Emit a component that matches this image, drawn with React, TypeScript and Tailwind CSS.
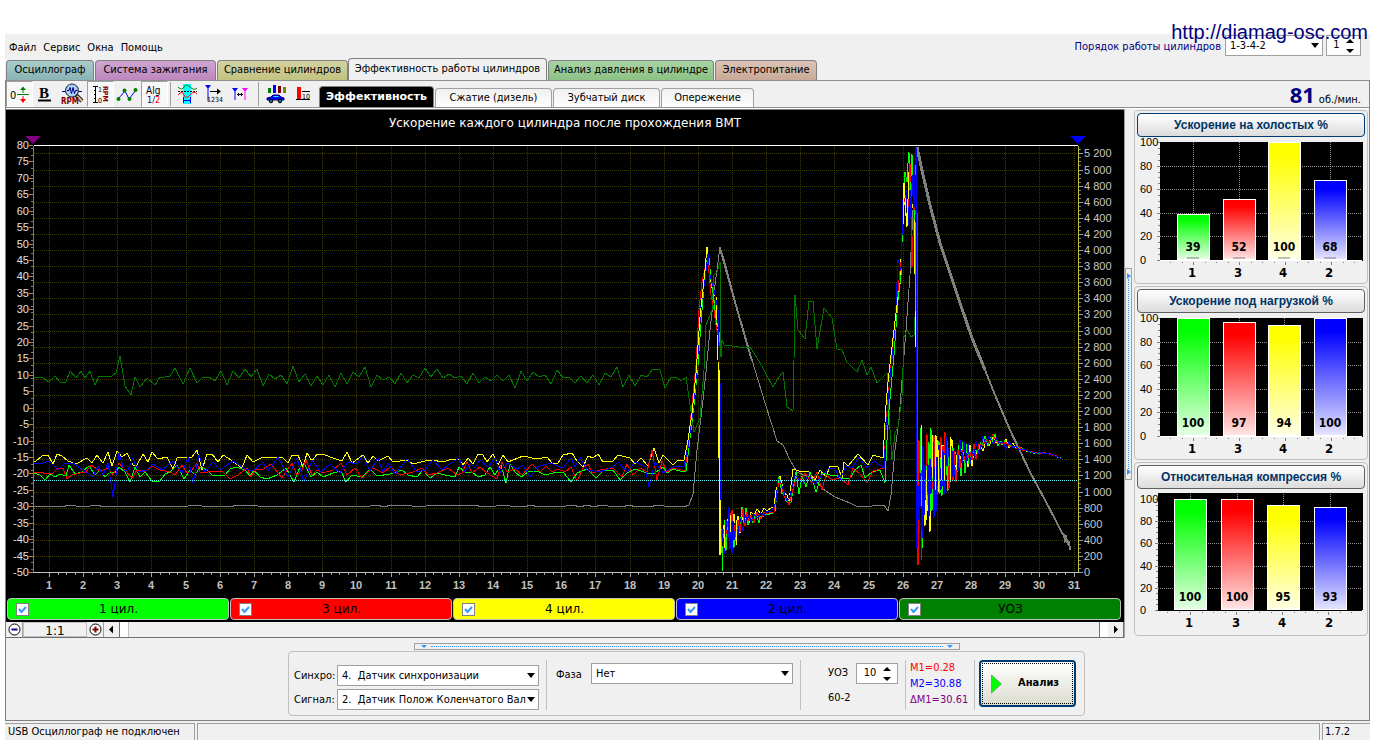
import { useState, type ReactNode } from 'react'
import { clsx } from 'clsx'

type Point = [number, number]

const UI_FONT = "font-['DejaVu_Sans_Condensed','Noto_Sans',sans-serif]"

const TABS = [
  { label: 'Осциллограф', style: 'mr-px w-[88px] from-[#a9cccc] to-[#8ab3b3]' },
  { label: 'Система зажигания', style: 'mr-px w-[121px] from-[#cfa6cf] to-[#bd86bd]' },
  { label: 'Сравнение цилиндров', style: 'w-[131px] from-[#d3d3a4] to-[#c2c280]' },
  { label: 'Эффективность работы цилиндров', style: 'mr-px w-[199px] from-[#f0f0f0] to-[#f0f0f0]' },
  { label: 'Анализ давления в цилиндре', style: 'mr-px w-[166px] from-[#a9d3a4] to-[#8cc184]' },
  { label: 'Электропитание', style: 'w-[102px] from-[#dbc4b6] to-[#c9a997]' },
]

const SUB_TABS = [
  { label: 'Сжатие (дизель)', style: 'w-[117px]' },
  { label: 'Зубчатый диск', style: 'w-[107px]' },
  { label: 'Опережение', style: 'w-[93px]' },
]

const LEGEND = [
  { label: '1 цил.', style: 'bg-[#00ff00]' },
  { label: '3 цил.', style: 'bg-[#ff0000]' },
  { label: '4 цил.', style: 'bg-[#ffff00]' },
  { label: '2 цил.', style: 'bg-[#0000ff]' },
  { label: 'УОЗ', style: 'bg-[#008000]' },
]

// Idle section of each trace, in chart units
const YELLOW: Point[] = [
  [34, 461], [36, 461], [42, 456], [48, 455], [53, 464], [57, 454], [62, 456], [68, 461], [76, 464], [87, 458],
  [92, 463], [97, 455], [103, 463], [108, 452], [112, 466], [117, 451], [122, 457], [127, 453], [133, 465], [137, 465],
  [143, 454], [148, 462], [152, 452], [158, 459], [167, 457], [173, 469], [177, 458], [192, 457], [197, 450], [202, 470],
  [207, 454], [212, 454], [218, 462], [223, 455], [228, 458], [242, 468], [247, 455], [253, 462], [263, 457], [283, 458],
  [288, 463], [292, 455], [298, 455], [303, 467], [307, 453], [312, 461], [317, 454], [323, 454], [330, 457], [342, 461],
  [347, 452], [352, 463], [363, 455], [368, 463], [373, 456], [378, 461], [388, 456], [393, 462], [407, 460], [413, 464],
  [425, 461], [433, 460], [442, 462], [453, 459], [460, 460], [463, 465], [468, 458], [473, 464], [478, 454], [483, 455],
  [487, 462], [493, 454], [498, 465], [503, 455], [508, 462], [523, 456], [537, 459], [547, 457], [552, 463], [558, 463],
  [563, 455], [572, 453], [577, 461], [583, 467], [588, 456], [593, 458], [598, 454], [603, 462], [613, 461], [618, 455],
  [630, 458], [635, 464], [641, 458], [648, 466], [654, 448], [659, 463], [663, 455], [673, 465], [678, 460], [684, 460],
]
const GREEN: Point[] = [
  [34, 473], [40, 475], [45, 480], [50, 474], [55, 477], [60, 474], [66, 476], [69, 465], [75, 474], [82, 472],
  [89, 466], [95, 475], [100, 470], [105, 477], [110, 472], [115, 473], [119, 467], [125, 472], [130, 482], [135, 467],
  [140, 477], [145, 472], [152, 481], [160, 481], [165, 474], [170, 472], [177, 465], [184, 479], [190, 470], [195, 475],
  [200, 467], [207, 470], [213, 476], [225, 475], [230, 469], [236, 467], [245, 470], [250, 476], [254, 470], [260, 477],
  [267, 479], [277, 475], [286, 468], [294, 482], [300, 467], [304, 463], [311, 477], [317, 472], [323, 477], [333, 473],
  [341, 471], [346, 482], [352, 475], [362, 477], [370, 469], [377, 476], [390, 474], [402, 470], [408, 475], [417, 477],
  [423, 470], [430, 478], [437, 473], [445, 475], [455, 477], [459, 467], [465, 472], [472, 472], [478, 477], [485, 475],
  [490, 467], [495, 475], [501, 465], [506, 483], [510, 464], [515, 472], [521, 477], [528, 472], [537, 471], [545, 475],
  [557, 472], [563, 472], [571, 482], [577, 473], [587, 469], [596, 478], [603, 471], [613, 470], [620, 480], [627, 473],
  [635, 469], [647, 473], [655, 473], [663, 467], [667, 473], [673, 469], [683, 472], [686, 471],
]
const RED: Point[] = [
  [34, 472], [40, 472], [47, 474], [53, 473], [58, 468], [63, 468], [67, 479], [72, 475], [80, 473], [86, 472],
  [91, 465], [100, 471], [108, 468], [113, 475], [119, 463], [125, 470], [132, 478], [137, 470], [145, 472], [152, 466],
  [160, 470], [170, 472], [175, 475], [182, 465], [187, 473], [192, 470], [197, 463], [200, 472], [208, 472], [222, 471],
  [230, 479], [238, 475], [247, 468], [251, 477], [255, 470], [263, 469], [271, 464], [282, 478], [287, 470], [292, 463],
  [297, 475], [302, 470], [306, 460], [312, 475], [317, 470], [323, 473], [333, 470], [341, 463], [347, 475], [355, 468],
  [362, 478], [367, 473], [373, 468], [383, 473], [390, 467], [400, 475], [413, 472], [422, 468], [428, 475], [437, 473],
  [448, 468], [457, 475], [462, 473], [467, 462], [472, 473], [480, 467], [487, 473], [497, 479], [502, 462], [507, 472],
  [515, 469], [522, 475], [532, 464], [540, 472], [546, 466], [552, 472], [558, 469], [565, 472], [571, 467], [577, 481],
  [583, 468], [588, 464], [592, 473], [600, 470], [613, 468], [622, 477], [627, 464], [633, 475], [640, 468], [647, 472],
  [652, 450], [657, 480], [662, 461], [667, 472], [673, 468], [685, 471],
]
const BLUE: Point[] = [
  [34, 463], [40, 464], [49, 461], [58, 470], [65, 463], [73, 463], [80, 468], [86, 472], [93, 477], [98, 466],
  [103, 475], [108, 463], [113, 497], [119, 453], [124, 470], [128, 470], [133, 458], [138, 472], [147, 470], [153, 464],
  [162, 470], [173, 461], [182, 473], [188, 457], [193, 483], [199, 455], [205, 472], [213, 462], [220, 470], [233, 461],
  [245, 469], [253, 471], [263, 462], [268, 471], [278, 457], [288, 477], [297, 458], [304, 482], [312, 460], [321, 472],
  [330, 464], [340, 473], [348, 462], [357, 464], [363, 456], [370, 471], [378, 458], [383, 472], [388, 463], [395, 474],
  [407, 459], [417, 472], [425, 470], [433, 460], [442, 470], [448, 465], [459, 458], [465, 472], [470, 463], [475, 468],
  [480, 460], [488, 467], [495, 458], [500, 473], [507, 463], [517, 469], [523, 465], [530, 477], [537, 467], [550, 463],
  [563, 468], [571, 458], [575, 467], [580, 457], [587, 470], [600, 472], [613, 467], [618, 462], [627, 472], [635, 462],
  [645, 467], [649, 487], [655, 462], [663, 473], [673, 467], [684, 466],
]

// Two throttle blips: rise, peak and fall
const BLIP_1: Record<string, Point[]> = {
  yellow: [[688, 440], [692, 413], [696, 373], [700, 317], [705, 270], [707, 247], [710, 277], [713, 293], [716, 297], [718, 360], [720, 555]],
  green: [[688, 455], [694, 405], [698, 365], [702, 310], [706, 262], [709, 258], [711, 280], [714, 300], [716, 320], [719, 330], [721, 520], [723, 571]],
  red: [[688, 445], [691, 415], [696, 365], [699, 310], [702, 282], [705, 268], [708, 262], [711, 295], [714, 310], [716, 325], [719, 340], [721, 530]],
  blue: [[688, 448], [692, 418], [697, 370], [701, 305], [705, 280], [708, 254], [710, 275], [714, 290], [718, 310], [720, 380], [721, 520]],
}
const REST: Record<string, Point[]> = {
  yellow: [[793, 469], [802, 472], [808, 471], [815, 480], [820, 470], [826, 477], [830, 466], [838, 467], [842, 478], [844, 462], [848, 466], [858, 454], [868, 465], [873, 455], [883, 458]],
  green: [[796, 472], [799, 494], [802, 476], [806, 487], [810, 472], [816, 492], [822, 473], [830, 475], [836, 475], [842, 479], [850, 478], [855, 470], [861, 465], [865, 478], [872, 472], [880, 470], [885, 483]],
  red: [[796, 478], [800, 480], [805, 473], [812, 483], [817, 472], [822, 490], [826, 475], [832, 480], [840, 478], [848, 485], [853, 468], [861, 475], [867, 483], [873, 471], [884, 468]],
  blue: [[795, 475], [803, 484], [808, 475], [815, 484], [822, 475], [828, 469], [835, 468], [840, 480], [846, 466], [852, 468], [859, 457], [867, 468], [874, 461], [884, 468]],
}
const BLIP_2: Record<string, Point[]> = {
  yellow: [[886, 405], [888, 382], [893, 338], [898, 297], [900, 285], [902, 233], [904, 183], [905, 205], [907, 227], [909, 172], [910, 190], [912, 208], [914, 200], [916, 347], [917, 480]],
  green: [[887, 440], [889, 410], [894, 355], [898, 300], [901, 275], [903, 210], [905, 172], [907, 182], [908, 163], [909, 152], [910, 200], [912, 154], [913, 190], [915, 220], [917, 400], [918, 500]],
  red: [[886, 425], [890, 375], [894, 335], [899, 280], [901, 262], [903, 205], [906, 195], [908, 215], [910, 164], [911, 182], [912, 268], [914, 205], [916, 215], [917, 345], [918, 565]],
  blue: [[886, 430], [890, 378], [895, 330], [898, 260], [901, 270], [903, 200], [906, 190], [908, 225], [910, 190], [911, 218], [913, 175], [914, 208], [915, 165], [916, 148], [916, 500], [917, 548]],
}

// [x, middle, amplitude]
const ENVELOPE_1: [number, number, number][] = [
  [721, 535, 22], [727, 528, 28], [735, 528, 26], [742, 520, 18], [750, 517, 10], [760, 515, 5], [770, 512, 3], [775, 509, 2],
  [777, 488, 12], [779, 476, 4], [783, 492, 5], [788, 502, 3], [792, 499, 3],
]
const ENVELOPE_2: [number, number, number][] = [
  [917, 495, 55], [921, 490, 66], [926, 485, 62], [932, 478, 50], [940, 468, 42], [948, 460, 32], [955, 460, 24], [965, 457, 18],
  [975, 452, 12], [982, 444, 9], [992, 440, 7], [1002, 443, 6], [1012, 446, 4], [1024, 450, 1], [1034, 453, 1], [1048, 453, 1], [1061, 458, 1],
]

const ADVANCE: Point[] = [
  [34, 377], [43, 378], [49, 382], [55, 376], [60, 382], [66, 382], [70, 371], [76, 378], [81, 371], [85, 378],
  [90, 371], [95, 385], [99, 376], [112, 376], [116, 373], [120, 356], [125, 386], [131, 395], [135, 377], [140, 387],
  [147, 378], [155, 385], [160, 377], [165, 377], [170, 376], [175, 368], [183, 384], [190, 368], [197, 383],
]
const ADVANCE_TAIL: Point[] = [
  [660, 370], [665, 388], [671, 377], [676, 377], [681, 381], [686, 377], [690, 405], [694, 432], [700, 418], [704, 370],
  [706, 325], [712, 310], [714, 275], [717, 272], [720, 262], [721, 357], [722, 340], [724, 345], [732, 346], [745, 348],
  [750, 347], [757, 358], [763, 368], [766, 374], [773, 387], [779, 377], [783, 372], [787, 407], [793, 411], [794, 360],
  [795, 295], [798, 330], [805, 339], [809, 301], [813, 301], [817, 349], [824, 308], [832, 318], [837, 349], [842, 350],
  [847, 362], [857, 372], [862, 360], [867, 375], [871, 367], [877, 383], [887, 373], [890, 430], [892, 460], [895, 433],
  [898, 427], [902, 397], [904, 337], [907, 330], [911, 337], [914, 335], [915, 317], [916, 290],
]
const RPM_TAIL: Point[] = [
  [670, 506], [684, 507], [689, 505], [693, 494], [697, 450], [703, 400], [706, 372], [710, 330], [715, 285], [718, 262],
  [720, 247], [724, 259], [735, 300], [745, 335], [755, 370], [765, 403], [772, 425], [777, 441], [783, 445], [790, 460],
  [797, 472], [815, 480], [823, 489], [835, 497], [850, 503], [858, 507], [872, 506], [884, 505], [888, 511], [891, 495],
  [895, 450], [899, 420], [902, 380], [906, 330], [910, 275], [912, 230], [914, 190], [917, 147],
]
const RPM_FALL: Point[] = [
  [917, 147], [921, 166], [930, 205], [940, 243], [950, 273], [960, 303], [972, 338], [985, 370],
]
const RPM_END: Point[] = [
  [985, 370], [995, 395], [1010, 430], [1020, 451], [1030, 472], [1045, 500], [1055, 519], [1062, 533], [1064, 535],
  [1065, 540], [1066, 537], [1068, 545], [1069, 541], [1070, 550],
]

function makeRandom(seed: number) {
  let s = seed
  return () => {
    s = (s * 16807) % 2147483647
    return s / 2147483647
  }
}

function scatter(env: [number, number, number][], seed: number, bias = 0): Point[] {
  const rnd = makeRandom(seed)
  const pts: Point[] = []
  let side = seed % 2 ? 1 : -1
  for (let i = 0; i < env.length - 1; i++) {
    const [x0, m0, a0] = env[i]
    const [x1, m1, a1] = env[i + 1]
    for (let x = x0 + (seed % 3 ? 1 : 0); x < x1; ) {
      const t = (x - x0) / (x1 - x0)
      const amp = a0 + (a1 - a0) * t
      const r = rnd()
      // Squared so that only a few samples reach the full amplitude
      pts.push([x, Math.round(m0 + (m1 - m0) * t + side * amp * (0.15 + 0.85 * r * r) + bias)])
      side = -side
      x += amp > 25 ? 1 : amp > 12 ? 2 : 3
    }
  }
  return pts
}

function flat(from: number, to: number, step: number, mid: number, amp: number, seed: number): Point[] {
  const rnd = makeRandom(seed)
  const pts: Point[] = []
  for (let x = from, side = 1; x < to; x += step, side = -side) {
    pts.push([x, Math.round(mid + side * amp * rnd())])
  }
  return pts
}

const toPoints = (pts: Point[]) => pts.map((p) => p.join(',')).join(' ')

const trace = (idle: Point[], name: string, seed: number, bias: number) =>
  toPoints([
    ...idle,
    ...BLIP_1[name],
    ...scatter(ENVELOPE_1, seed, bias),
    ...REST[name],
    ...BLIP_2[name],
    ...scatter(ENVELOPE_2, seed + 90),
    [1062, 459],
  ])

const TRACES = [
  { color: '#ffff00', points: trace(YELLOW, 'yellow', 3391, -3) },
  { color: '#00ff00', points: trace(GREEN, 'green', 4212, 2) },
  { color: '#ff0000', points: trace(RED, 'red', 7717, 1) },
  { color: '#0000ff', points: trace(BLUE, 'blue', 9974, -1) },
]

// The yellow trace stays readable over the dense bursts
const YELLOW_ACCENTS =
  'M724.5 525V548 M730.5 515V532 M736.5 520V545 M921.5 425V470 M926.5 470V520 M932.5 435V478 M935.5 460V490 M938.5 450V492 M941.5 445V480 M944.5 455V480 M950.5 437V482 M956.5 455V470 M688 440L692 413L696 373L700 317L705 270L707 247 M886 405L888 382L893 338L898 297 M903 225L904 183L907 227L909 172'

const xAt = (n: number) => Math.round(49 + (n - 1) * 34.15)
const leftY = (v: number) => Math.round(572 - (v + 50) * 3.285)
const rightY = (v: number) => Math.round(572 - v * 0.0805)
const range = (n: number) => Array.from({ length: n }, (_, i) => i)

function MainChart() {
  return (
    <svg viewBox="6 130 1118 467" className="block w-full" role="img" aria-label="Ускорение каждого цилиндра">
      <g stroke="#3c3c00" strokeDasharray="1 1" shapeRendering="crispEdges">
        {range(31).map((i) => (
          <line key={i} x1={xAt(i + 1) + 0.5} x2={xAt(i + 1) + 0.5} y1="146" y2="572" />
        ))}
        {range(26).map((i) => (
          <line key={i} x1="34" x2="1078" y1={rightY((i + 1) * 200) + 0.5} y2={rightY((i + 1) * 200) + 0.5} />
        ))}
      </g>

      <g fill="none" strokeWidth="1" shapeRendering="crispEdges">
        <polyline stroke="#808080" points={toPoints([...flat(34, 670, 7, 506, 1, 31), ...RPM_TAIL])} />
        <polyline stroke="#808080" strokeWidth="3" points={toPoints(RPM_FALL)} />
        <polyline stroke="#808080" strokeWidth="2" points={toPoints(RPM_END)} />
        <polyline stroke="#808080" strokeWidth="2" points="720,248 735,302 752,361" />
        <polyline
          stroke="#007800"
          points={toPoints([...ADVANCE, ...flat(203, 658, 6, 377, 11, 555), ...ADVANCE_TAIL])}
        />
        {TRACES.map((t) => (
          <polyline key={t.color} stroke={t.color} points={t.points} />
        ))}
        <path stroke="#ff0000" d="M917.5 213V345 M918.5 520V565 M921.5 530V560" />
        <path stroke="#0000ff" d="M916.5 150V545 M720.5 400V500 M721.5 440V500" />
        <path stroke="#ffff00" d="M719.5 370V555 M720.5 500V550" />
        <path stroke="#ffff00" d={YELLOW_ACCENTS} />
      </g>

      <g shapeRendering="crispEdges">
        <line x1="34" x2="1078" y1="480.5" y2="480.5" stroke="#60ffff" strokeDasharray="1 1" />
        <line x1="34" x2="1078" y1="145.5" y2="145.5" stroke="#ffffff" />
        <line x1="33.5" x2="33.5" y1="146" y2="573" stroke="#40a040" />
        <line x1="1078.5" x2="1078.5" y1="146" y2="573" stroke="#c0c040" />
        <line x1="29" x2="1079" y1="572.5" y2="572.5" stroke="#c0c0c0" />
        {range(131).filter((i) => i % 5 !== 0).filter((i) => i % 2 === 1).map((i) => (
          <line key={i} x1="31" x2="33" y1={leftY(i - 50) + 0.5} y2={leftY(i - 50) + 0.5} stroke="#808080" />
        ))}
        {range(27).map((i) => (
          <line key={i} x1="29" x2="33" y1={leftY(i * 5 - 50) + 0.5} y2={leftY(i * 5 - 50) + 0.5} stroke="#c08040" />
        ))}
        {range(106).map((i) => (
          <line key={i} x1="1079" x2="1081" y1={rightY(i * 50) + 0.5} y2={rightY(i * 50) + 0.5} stroke="#808080" />
        ))}
        {range(27).map((i) => (
          <line key={i} x1="1079" x2="1083" y1={rightY(i * 200) + 0.5} y2={rightY(i * 200) + 0.5} stroke="#a0a0a0" />
        ))}
        {range(121).map((i) => {
          const x = Math.round(49 + i * 8.5375) + 0.5
          return <line key={i} x1={x} x2={x} y1="573" y2={i % 4 ? 575 : 577} stroke="#a0a0a0" />
        })}
      </g>

      <g className="font-['Liberation_Sans',Arial,sans-serif] text-[11px]">
        <g fill="#e0e0e0" textAnchor="end">
          {range(27).map((i) => (
            <text key={i} x="29" y={leftY(i * 5 - 50) + 4}>{i * 5 - 50}</text>
          ))}
        </g>
        <g fill="#c8c8c8">
          {range(27).map((i) => (
            <text key={i} x="1084" y={rightY(i * 200) + 4}>
              {i < 5 ? i * 200 : `${Math.floor(i / 5)} ${String((i % 5) * 200).padStart(3, '0')}`}
            </text>
          ))}
        </g>
        <g fill="#c0c0c0" textAnchor="middle" className="font-bold">
          {range(31).map((i) => (
            <text key={i} x={xAt(i + 1)} y="589">{i + 1}</text>
          ))}
        </g>
      </g>

      <path d="M25 136h16l-8 8z" fill="#800080" />
      <path d="M1070 136h16l-8 8z" fill="#0000ff" />
    </svg>
  )
}

const BAR_COLORS = ['#00ff00', '#ff0000', '#ffff00', '#0000ff']
const CYLINDERS = [1, 3, 4, 2]

function BarPanel({
  id,
  title,
  values,
  active,
  left = 23,
  full = 4,
  base = 122,
  centers = [56, 102, 147, 193],
}: {
  id: string
  title: string
  values: number[]
  active?: boolean
  left?: number
  full?: number
  base?: number
  centers?: number[]
}) {
  const yAt = (v: number) => Math.round(base - (v / 100) * (base - full))

  return (
    <section className="rounded border border-[#c0c0c0] p-0.5">
      <button
        className={clsx(
          'block h-6 w-full rounded-sm border bg-linear-to-b from-white to-[#dcdcdc] text-center text-[12px] leading-[22px] font-bold text-[#003366]',
          "font-['Liberation_Sans',Arial,sans-serif]",
          active ? 'border-[#003c74]' : 'border-[#606060]',
        )}
      >
        {title}
      </button>
      <svg viewBox="0 0 228 143" className="mt-px block w-full overflow-visible" role="img" aria-label={title}>
        <defs>
          {BAR_COLORS.map((c, i) => (
            <linearGradient key={c} id={`${id}-${i}`} x1="0" x2="0" y1="0" y2="1.1">
              <stop offset="0.1" stopColor={c} />
              <stop offset="1" stopColor="#ffffff" />
            </linearGradient>
          ))}
        </defs>
        <rect x={left} y={full === 4 ? 4 : 3} width={226 - left} height={base - 3} fill="#000" />
        <g stroke="#909090" strokeDasharray="1 1" shapeRendering="crispEdges">
          {[20, 40, 60, 80].map((v) => (
            <line key={v} x1={left} x2="225" y1={yAt(v) + 0.5} y2={yAt(v) + 0.5} />
          ))}
          {centers.map((c) => (
            <line key={c} x1={c + 0.5} x2={c + 0.5} y1="4" y2={base} />
          ))}
        </g>
        <g stroke="#808080" shapeRendering="crispEdges">
          {range(21).map((i) => (
            <line key={i} x1={i % 4 ? left - 2 : left - 3} x2={left} y1={yAt(i * 5) + 0.5} y2={yAt(i * 5) + 0.5} />
          ))}
          {range(17).map((i) => {
            const x = Math.round(centers[0] - 23 + i * 11.5) + 0.5
            return <line key={i} x1={x} x2={x} y1={base + 2} y2={i % 4 === 2 ? base + 5 : base + 3} />
          })}
        </g>
        <line x1={left} x2="225" y1={base + 0.5} y2={base + 0.5} stroke={active !== undefined ? '#fff' : '#000'} shapeRendering="crispEdges" />
        {values.map((v, i) => (
          <rect
            key={i}
            x={centers[i] - 16 + 0.5}
            y={yAt(v) + 0.5}
            width="32"
            height={base - yAt(v) - 1}
            fill={`url(#${id}-${i})`}
            stroke="#fff"
            shapeRendering="crispEdges"
          />
        ))}
        <g className="font-['Liberation_Sans',Arial,sans-serif]" fill="#000">
          {[0, 20, 40, 60, 80, 100].map((v) => (
            <text key={v} x="3" y={yAt(v) + 4} className="text-[11px]">{v}</text>
          ))}
          <g textAnchor="middle" className="font-['DejaVu_Sans_Condensed','Noto_Sans',sans-serif] text-[13px] font-bold">
            {values.map((v, i) => (
              <g key={i}>
                <text x={centers[i]} y={base - 9} className="text-[12px]">{v}</text>
                {active && <line x1={centers[i] - 6} x2={centers[i] + 6} y1={base - 2} y2={base - 2} stroke="#808080" />}
                <text x={centers[i] - 1} y={base + 17}>{CYLINDERS[i]}</text>
              </g>
            ))}
          </g>
        </g>
      </svg>
    </section>
  )
}

function Tool({ label, pressed, children }: { label: string; pressed?: boolean; children: ReactNode }) {
  return (
    <button
      aria-label={label}
      aria-pressed={pressed}
      className={clsx(
        'h-[26px] w-[27px] shrink-0 border',
        pressed ? 'border-[#a0a0a0] border-r-white border-b-white bg-[#f8f8f8]' : 'border-transparent',
      )}
    >
      <svg viewBox="0 0 25 24" className="block h-6 w-[25px] font-['DejaVu_Sans_Condensed',sans-serif]">
        {children}
      </svg>
    </button>
  )
}

function Combo({ label, value, className }: { label: string; value: string; className: string }) {
  return (
    <span className={clsx('relative block', className)}>
      <select
        aria-label={label}
        className="block h-[21px] w-full appearance-none border border-[#a0a0a0] bg-white pl-1 text-[11px] leading-[19px] text-black"
      >
        <option>{value}</option>
      </select>
      <svg viewBox="0 0 8 5" className="pointer-events-none absolute top-2 right-1 h-[5px] w-2">
        <path d="M0 0h8L4 5z" />
      </svg>
    </span>
  )
}

function Spin({ label, value, className }: { label: string; value: string; className: string }) {
  return (
    <span className={clsx('flex h-[21px] items-center border border-[#a0a0a0] bg-white', className)}>
      <input aria-label={label} defaultValue={value} className="w-full min-w-0 bg-transparent text-center text-[11px] outline-none" />
      <svg viewBox="0 0 8 14" className="mr-1.5 h-3.5 w-2 shrink-0">
        <path d="M0 4h8L4 0zM0 10h8L4 14z" />
      </svg>
    </span>
  )
}

function Toolbar() {
  return (
    <div className="flex h-[28px] items-end border-y border-[#909090] bg-[#f0f0f0]">
      <div className="flex h-[26px] items-center">
        <Tool label="Ноль" pressed>
          <text x="3" y="17" fontSize="11">0</text>
          <path d="M10 12.500h12" stroke="#008000" />
          <path d="M13 8h6l-3-3.500zM15.500 8h1v3h-1z" fill="#008000" />
          <path d="M13 17h6l-3 4zM15.500 14h1v3h-1z" fill="#f00" />
        </Tool>
        <Tool label="Жирный">
          <text x="5" y="16" fontSize="15" fontWeight="700" className="font-['Liberation_Serif',serif]">B</text>
          <path d="M4 18.500h13" stroke="#000" strokeWidth="2" />
        </Tool>
        <Tool label="RPM">
          <path d="M1 9.500h4M17 9.500h4" stroke="#000080" />
          <circle cx="11" cy="8.500" r="6.500" fill="#a8d0ff" stroke="#202020" />
          <path d="M6 8.500h2l1-3 1.500 6 1.500-6 1.500 6 1-3h2" fill="none" stroke="#000080" />
          <path d="M15 13l6 6" stroke="#202020" strokeWidth="4" />
          <path d="M16 14l5 5" stroke="#e0c080" strokeWidth="2" />
          <text x="0" y="22" fontSize="8" fontWeight="700" fill="#800000">RPM</text>
        </Tool>
        <Tool label="Шкала RPM" pressed>
          <path d="M5 4.500h5M5 20.500h5M7.500 5v15M6 8.500h2M6 12.500h2M6 16.500h2" stroke="#000" />
          <text x="10" y="10" fontSize="7">1</text>
          <text x="10" y="21" fontSize="7">0</text>
          <text x="15" y="4" fontSize="7" fontWeight="700" fill="#800000" transform="rotate(90 15 4)">RPM</text>
        </Tool>
        <Tool label="Точки">
          <path d="M3 17l7-8 4 8 7-9" fill="none" stroke="#00f" strokeWidth="1" />
          <g fill="#008000">
            <circle cx="3.500" cy="17" r="2" />
            <circle cx="9.500" cy="8.500" r="2" />
            <circle cx="14.500" cy="17" r="2" />
            <circle cx="20.500" cy="8" r="2" />
          </g>
        </Tool>
        <Tool label="Алгоритм" pressed>
          <text x="4" y="12" fontSize="10">Alg</text>
          <text x="5" y="21" fontSize="9" fill="#000080">1/<tspan fill="#f00">2</tspan></text>
        </Tool>
        <span className="mx-0.5 h-6 w-px bg-[#a0a0a0]" />
        <Tool label="Диапазон">
          <rect x="9" y="2" width="8" height="20" fill="#0ff" />
          <path d="M4 5q4 4 6 0t6 0 7 1" fill="none" stroke="#008000" />
          <path d="M4 9.500h19" stroke="#000" strokeDasharray="2 1" />
          <path d="M4 13q4-5 6 0t6 0 7-1" fill="none" stroke="#f00" />
          <path d="M9.500 15v6M16.500 15v6M10 18.500h6" stroke="#00f" />
        </Tool>
        <Tool label="Разметка">
          <path d="M4 3h6L7 7zM6.500 6h1v13h-1z" fill="#00f" />
          <path d="M9 9.500h9" stroke="#000" />
          <path d="M16 6.500l4 3-4 3z" />
          <text x="6" y="20" fontSize="7">1234</text>
        </Tool>
        <Tool label="Маркеры">
          <path d="M4 6h6L7 10zM6.500 9h1v9h-1z" fill="#00f" />
          <path d="M14 6h6l-3 4zM16.500 9h1v9h-1z" fill="#f0f" />
          <path d="M9 12.500h6M10.500 11v3M13.500 11v3" stroke="#000" />
        </Tool>
        <span className="mx-1 h-6 w-px bg-[#a0a0a0]" />
        <Tool label="Разгон">
          <path d="M4 6h3v5H4z" fill="#008000" />
          <path d="M9 3h3v8H9z" fill="#00f" />
          <path d="M14 4h3v7h-3z" fill="#800000" />
          <path d="M19 5h3v6h-3z" fill="#808000" />
          <path d="M3 18v-2l4-1 2-2h6l2 2 3 1v2z" fill="#00f" stroke="#000080" />
          <path d="M9 15l1-1h4l1 1z" fill="#0ff" />
          <circle cx="7" cy="19" r="1.800" fill="#008080" stroke="#000" />
          <circle cx="16" cy="19" r="1.800" fill="#008080" stroke="#000" />
        </Tool>
        <Tool label="Порог">
          <path d="M6 5h4v12H6z" fill="#f00" />
          <path d="M5 17.500h14M11 9.500h8" stroke="#000" />
          <text x="11" y="17" fontSize="7">10</text>
        </Tool>
      </div>

      <div className="ml-0.5 flex items-end gap-px text-center text-[11px]">
        <button className="h-[21px] w-[115px] rounded-t-sm border border-b-0 border-[#808080] bg-black font-['DejaVu_Sans',Verdana,sans-serif] text-[11px] font-bold text-white">
          Эффективность
        </button>
        {SUB_TABS.map((t) => (
          <button
            key={t.label}
            className={clsx('h-[19px] rounded-t-sm border border-b-0 border-[#a0a0a0] bg-linear-to-b from-[#f0f0f0] to-white', t.style)}
          >
            {t.label}
          </button>
        ))}
      </div>

      <p className="mr-2 ml-auto flex h-[26px] items-baseline gap-1 text-[11px]">
        <b className="font-['Noto_Sans',sans-serif] text-[22px] leading-[26px] text-[#000080]">81</b>
        об./мин.
      </p>
    </div>
  )
}

function ZoomRow() {
  return (
    <div className="flex h-4 items-stretch border-b border-[#707070] bg-white">
      <button aria-label="Уменьшить" className="w-[17px] border-r border-[#a0a0a0] bg-[#f0f0f0]">
        <svg viewBox="0 0 15 15" className="mx-auto block size-[15px]">
          <circle cx="7.500" cy="7.500" r="5.500" fill="#fff" stroke="#000" />
          <path d="M4.500 7.500h6" stroke="#000080" strokeWidth="2" />
        </svg>
      </button>
      <output className="w-16 border border-[#c0c0c0] bg-[#f0f0f0] text-center font-['DejaVu_Sans',sans-serif] text-[12px] leading-4">
        1:1
      </output>
      <button aria-label="Увеличить" className="w-[17px] border-r border-[#a0a0a0] bg-[#f0f0f0]">
        <svg viewBox="0 0 15 15" className="mx-auto block size-[15px]">
          <circle cx="7.500" cy="7.500" r="5.500" fill="#fff" stroke="#000" />
          <path d="M4.500 7.500h6M7.500 4.500v6" stroke="#800000" strokeWidth="2" />
        </svg>
      </button>
      <button aria-label="Влево" className="w-4 border-r border-[#707070] bg-[#f0f0f0]">
        <svg viewBox="0 0 15 15" className="block size-[15px]"><path d="M9 3.500v8l-4-4z" /></svg>
      </button>
      <div className="flex-1 pr-2 pl-2">
        <div className="h-full border-r border-l border-[#707070] border-l-[#c0c0c0] bg-[#f0f0f0]" />
      </div>
      <button aria-label="Вправо" className="w-4 border-r border-[#707070] bg-[#f0f0f0]">
        <svg viewBox="0 0 15 15" className="block size-[15px]"><path d="M6 3.500v8l4-4z" /></svg>
      </button>
    </div>
  )
}

function Controls() {
  return (
    <div className="mx-auto flex h-[65px] w-[797px] rounded border border-[#c0c0c0] pl-[5px]">
      <div className="mt-[13px] grid h-[46px] w-[245px] grid-cols-[43px_202px] content-start items-center gap-y-[3px] text-[11px]">
        <span className="pt-0.5">Синхро:</span>
        <Combo label="Синхро" value={'4.\u00a0\u00a0Датчик синхронизации'} className="w-[202px]" />
        <span className="pt-0.5">Сигнал:</span>
        <Combo label="Сигнал" value={'2.\u00a0\u00a0Датчик Полож Коленчатого Вал'} className="w-[202px]" />
      </div>
      <div className="mt-2 ml-[7px] flex h-[50px] w-[255px] border-x border-[#c0c0c0] pt-[3px] pl-[9px] text-[11px]">
        <span className="w-[35px] pt-1">Фаза</span>
        <Combo label="Фаза" value="Нет" className="w-[202px]" />
      </div>
      <div className="mt-2 flex h-[50px] w-[105px] flex-col gap-1.5 border-r border-[#c0c0c0] pt-[3px] pl-[27px] text-[11px]">
        <span className="flex items-center gap-1">
          <span className="w-6">УОЗ</span>
          <Spin label="УОЗ" value="10" className="w-[42px]" />
        </span>
        <span>60-2</span>
      </div>
      <div className="mt-2 h-[50px] w-[69px] border-r border-[#c0c0c0] pl-1 text-[11px] leading-4">
        <p className="text-[#ff0000]">M1=0.28</p>
        <p className="text-[#0000ff]">M2=30.88</p>
        <p className="text-[#800080]">ΔM1=30.61</p>
      </div>
      <button className="mt-2 ml-1 h-[47px] w-[97px] rounded-sm border-2 border-[#003c74] bg-linear-to-b from-white to-[#dcdcd0] p-px">
        <span className="flex h-full items-center gap-4 border border-dotted border-black pl-2 text-[11px] font-bold">
          <svg viewBox="0 0 11 20" className="h-5 w-[11px]">
            <path d="M.5 1v18l10-9z" fill="#00ff00" stroke="#80a080" />
          </svg>
          Анализ
        </span>
      </button>
    </div>
  )
}

export default function App() {
  const [tab, setTab] = useState(3)

  return (
    <div className={clsx('min-h-screen bg-white pt-[34px] pr-3 pl-[5px] text-[11px] text-black', UI_FONT)}>
      <div className="bg-[#f0f0f0]">
        <header className="flex h-6">
          <nav className="flex flex-1 gap-[7px] pl-1 leading-7">
            {['Файл', 'Сервис', 'Окна', 'Помощь'].map((m) => (
              <button key={m}>{m}</button>
            ))}
          </nav>
          <div className="relative flex items-start pr-[9px]">
            <span className="mr-1 leading-[26px] text-[#000080]">Порядок работы цилиндров</span>
            <span className="mt-px flex gap-[3px]">
              <Combo label="Порядок работы цилиндров" value="1-3-4-2" className="w-[98px]" />
              <Spin label="Номер" value="1" className="w-[35px]" />
            </span>
            <a
              href="http://diamag-osc.com"
              className="absolute -top-3.5 right-0.5 font-['Liberation_Sans',Arial,sans-serif] text-[20px] leading-6 text-[#000080]"
            >
              http://diamag-osc.com
            </a>
          </div>
        </header>

        <div className="flex h-[22px] items-end pl-px">
          {TABS.map((t, i) => (
            <button
              key={t.label}
              onClick={() => setTab(i)}
              className={clsx(
                'rounded-t border border-b-0 border-[#808080] bg-linear-to-b whitespace-nowrap',
                i === tab ? 'h-[22px]' : 'h-5',
                t.style,
              )}
            >
              {t.label}
            </button>
          ))}
        </div>

        <main className="border-x border-[#808080]">
          <Toolbar />
          <div className="flex border-t border-white pr-px">
            <div className="min-w-0 flex-1 border-r border-[#a0a0a0]">
              <div className="border-t border-[#808080] bg-black pb-0.5">
                <h1 className="h-5 pt-[3px] text-center font-['DejaVu_Sans',Verdana,sans-serif] text-[12px] leading-5 text-white">
                  Ускорение каждого цилиндра после прохождения ВМТ
                </h1>
                <MainChart />
                <div className="flex gap-px pt-px pr-[3px] pl-px">
                  {LEGEND.map((l) => (
                    <label
                      key={l.label}
                      className={clsx(
                        'flex h-[22px] flex-1 items-center rounded-sm border border-[#c0c0c0] pl-2 font-[\'DejaVu_Sans\',Verdana,sans-serif] text-[12px]',
                        l.style,
                      )}
                    >
                      <span className="relative flex">
                        <input type="checkbox" defaultChecked className="peer size-[13px] appearance-none border border-[#808080] bg-white" />
                        <svg viewBox="0 0 13 13" className="pointer-events-none absolute inset-0 hidden size-[13px] peer-checked:block">
                          <path d="M3 6l2.500 3L10 4" fill="none" stroke="#3399ff" strokeWidth="2" />
                        </svg>
                      </span>
                      <span className="flex-1 pr-5 text-center">{l.label}</span>
                    </label>
                  ))}
                </div>
              </div>
              <ZoomRow />
            </div>

            <div className="flex w-[9px] items-center">
              <div className="flex h-[212px] w-[7px] flex-col items-center justify-between border border-[#a0a0a0] py-1">
                <svg viewBox="0 0 4 6" className="h-1.5 w-1"><path d="M0 0v6l4-3z" fill="#3399ff" /></svg>
                <span className="flex-1 border-l border-dotted border-[#3399ff]" />
                <svg viewBox="0 0 4 6" className="h-1.5 w-1"><path d="M0 0v6l4-3z" fill="#3399ff" /></svg>
              </div>
            </div>

            <aside className="flex w-[234px] flex-col gap-0.5 pt-px">
              <BarPanel id="idle" title="Ускорение на холостых %" values={[39, 52, 100, 68]} active />
              <BarPanel id="load" title="Ускорение под нагрузкой %" values={[100, 97, 94, 100]} active={false} />
              <BarPanel
                id="compression"
                title="Относительная компрессия %"
                values={[100, 100, 95, 93]}
                left={21}
                full={9}
                base={120}
                centers={[53, 100, 146, 193]}
              />
            </aside>
          </div>

          <div className="pt-[5px] pr-0.5 pb-px">
            <div className="mx-auto flex h-[7px] w-[546px] items-center gap-1 border border-[#a0a0a0] px-1.5">
              <svg viewBox="0 0 6 3" className="h-[3px] w-1.5"><path d="M0 0h6L3 3z" fill="#3399ff" /></svg>
              <span className="flex-1 border-t border-dotted border-[#3399ff]" />
              <svg viewBox="0 0 6 3" className="h-[3px] w-1.5"><path d="M0 0h6L3 3z" fill="#3399ff" /></svg>
            </div>
          </div>
          <div className="pr-0.5 pb-1">
            <Controls />
          </div>
        </main>

        <footer className="flex h-5 gap-0.5 border-t border-[#808080] pt-0.5 leading-4">
          <span className="w-[190px] border-t border-r border-[#a0a0a0] pl-[3px]">USB Осциллограф не подключен</span>
          <span className="flex-1 border-t border-x border-[#a0a0a0]" />
          <span className="w-12 border-t border-l border-[#a0a0a0] pl-0.5">1.7.2</span>
        </footer>
      </div>
    </div>
  )
}
